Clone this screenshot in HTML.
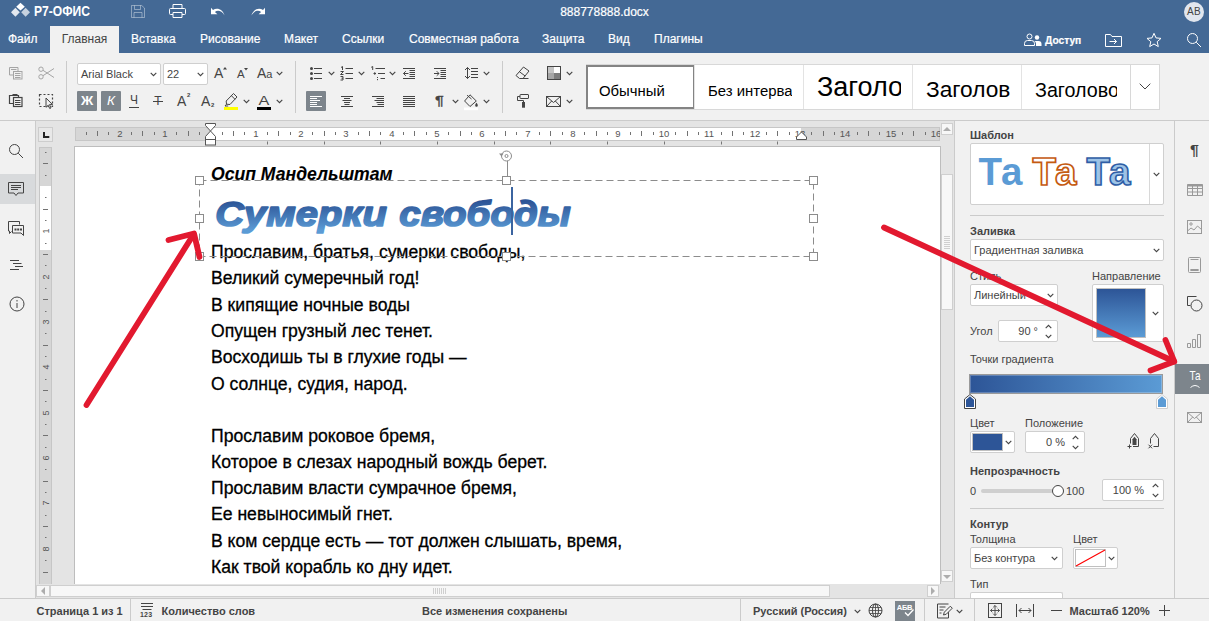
<!DOCTYPE html>
<html lang="ru">
<head>
<meta charset="utf-8">
<title>888778888.docx</title>
<style>
*{box-sizing:border-box;margin:0;padding:0}
html,body{width:1209px;height:621px;overflow:hidden;background:#e4e4e4;font-family:"Liberation Sans",Arial,sans-serif;font-size:11px;color:#444}
div{position:absolute;white-space:nowrap}
svg{position:absolute;overflow:visible}
#hdr{left:0;top:0;width:1209px;height:53px;background:#446995}
#logo{left:34px;top:3px;font-size:13.8px;font-weight:bold;color:#fff;line-height:18px;transform:scaleX(.875);transform-origin:0 0}
#title{left:0;width:1209px;top:5px;text-align:center;color:#fff;font-size:12px;line-height:14px;-webkit-text-stroke:.2px #fff}
.tab{top:26px;height:27px;line-height:26px;color:#fff;font-size:12px;-webkit-text-stroke:.2px #fff}
.tab.act{background:#f1f1f1;color:#444;text-align:center;-webkit-text-stroke:0}
#tb{left:0;top:53px;width:1209px;height:68px;background:#f1f1f1;border-bottom:1px solid #cbcbcb}
.sep{width:1px;background:#cbcbcb}
.cb{background:#fff;border:1px solid #cfcfcf;border-radius:2px;color:#444;overflow:hidden;font-size:11px}
.on{background:#7d858c;border-radius:1px}
.ic{stroke:#444;fill:none;stroke-width:1}
.b{font-weight:bold}
.t{color:#444;font-size:11px;line-height:13px}
.ln{left:211px;font-size:17.6px;color:#000;line-height:20px;-webkit-text-stroke:.3px #000}
.h{width:9px;height:9px;background:#fff;border:1px solid #8c8c8c}
.st{top:0;height:44px;overflow:hidden;color:#000}
.st span{position:absolute;left:0;white-space:nowrap}
.rn{font-size:9.5px;color:#555;line-height:10px;text-align:center;width:14px}
</style>
</head>
<body>
<div id="hdr"><svg style="left:0;top:0" width="40" height="20" viewBox="0 0 40 20"><path d="M20.5 2.8L24.8 6.7 20.5 10.6 16.2 6.7z" fill="#fff"/><path d="M15.4 7.8L19.8 12.2 15.4 16.8 11 12.2z" fill="#fff" opacity=".85"/><path d="M25.6 7.8L30 12.2 25.6 16.8 21.2 12.2z" fill="#fff" opacity=".7"/></svg><div id="logo">Р7-ОФИС</div><svg style="left:131px;top:5px" width="14" height="13" viewBox="0 0 14 13" opacity=".4"><path d="M.5 .5h10.2l2.8 2.6v9.4H.5z M3.5 .5v4h6v-4 M3 12.5v-5h8v5" fill="none" stroke="#fff"/></svg><svg style="left:169px;top:4px" width="17" height="14" viewBox="0 0 17 14"><path d="M4 4.5v-4h9v4 M4 10.5H1.5a1 1 0 0 1-1-1v-4a1 1 0 0 1 1-1h14a1 1 0 0 1 1 1v4a1 1 0 0 1-1 1H13 M4 8.5h9v5H4z" fill="none" stroke="#fff"/></svg><svg style="left:210px;top:7px" width="16" height="10" viewBox="0 0 16 10"><path d="M1 .8v6.4h6.4L4.9 4.9C7.6 2.9 11.6 3.4 14.6 8.6 13 2.6 7.3-.2 3 3z" fill="#fff"/></svg><svg style="left:250px;top:7px" width="16" height="10" viewBox="0 0 16 10"><path d="M15 .8v6.4H8.6l2.5-2.3C8.4 2.9 4.4 3.4 1.4 8.6 3 2.6 8.7-.2 13 3z" fill="#fff"/></svg><div id="title">888778888.docx</div><div style="left:1184px;top:2px;width:20px;height:20px;border-radius:10px;background:#e1e6ee;color:#444;font-size:10px;line-height:20px;text-align:center;letter-spacing:.3px">АВ</div><div class="tab" style="left:8px">Файл</div><div class="tab" style="left:131px">Вставка</div><div class="tab" style="left:200px">Рисование</div><div class="tab" style="left:284px">Макет</div><div class="tab" style="left:342px">Ссылки</div><div class="tab" style="left:409px">Совместная работа</div><div class="tab" style="left:542px">Защита</div><div class="tab" style="left:608px">Вид</div><div class="tab" style="left:654px">Плагины</div><div class="tab act" style="left:50px;width:69px">Главная</div><svg style="left:1024px;top:33px" width="18" height="14" viewBox="0 0 18 14"><circle cx="5.5" cy="3.5" r="2.5" fill="none" stroke="#fff"/><path d="M.5 12.5v-2a3 3 0 0 1 3-3h4a3 3 0 0 1 3 3v2z" fill="none" stroke="#fff"/><circle cx="13" cy="4.5" r="2.2" fill="#fff"/><path d="M10.5 8h4a3 3 0 0 1 3 3v2h-5.5v-2.5a4 4 0 0 0-1.5-2.5z" fill="#fff"/></svg><div class="tab b" style="left:1045px;font-size:10.2px;line-height:29px">Доступ</div><svg style="left:1105px;top:34px" width="17" height="13" viewBox="0 0 17 13"><path d="M.5 12.5V.5h5l1.5 2h9.5v10z" fill="none" stroke="#fff"/><path d="M4.5 7.5h7 M9 5l2.5 2.5L9 10" fill="none" stroke="#fff"/></svg><svg style="left:1146px;top:32px" width="16" height="16" viewBox="0 0 16 16"><path d="M8 1.3l2 4.6 5 .5-3.8 3.3 1.1 4.9L8 12l-4.3 2.6 1.1-4.9L1 6.4l5-.5z" fill="none" stroke="#fff" stroke-linejoin="round"/></svg><svg style="left:1186px;top:32px" width="16" height="16" viewBox="0 0 16 16"><circle cx="6.5" cy="6.5" r="5" fill="none" stroke="#fff"/><path d="M10.2 10.2l4.8 4.8" stroke="#fff" fill="none"/></svg></div><div id="tb"></div><div class="sep" style="left:66px;top:61px;height:52px"></div><div class="sep" style="left:295px;top:61px;height:52px"></div><div class="sep" style="left:502px;top:61px;height:52px"></div><svg style="left:9px;top:67px" width="16" height="14" viewBox="0 0 16 14"><path d="M9 4V.5H.5V8H4.5 M2 2.5h5.5" fill="none" stroke="#a5a5a5"/><rect x="4.5" y="4.5" width="8.5" height="7.5" fill="#f1f1f1" stroke="#a5a5a5"/><path d="M6 6.5h5.5 M6 8.5h5.5 M6 10.5h5.5" stroke="#a5a5a5"/></svg><svg style="left:38px;top:65.5px" width="17" height="14" viewBox="0 0 17 14"><circle cx="3" cy="3.2" r="2.2" fill="none" stroke="#a5a5a5"/><circle cx="3" cy="10.8" r="2.2" fill="none" stroke="#a5a5a5"/><path d="M5 4.3L16 11.5 M5 9.7L16 2.5" stroke="#a5a5a5" fill="none"/></svg><svg style="left:9px;top:94px" width="16" height="16" viewBox="0 0 16 16"><path d="M4.5 9.5H.5v-8H9.5v2" fill="none" stroke="#444" stroke-width="1.2"/><rect x="3.5" y="0" width="5" height="2" fill="#444"/><rect x="4.5" y="3.5" width="8.5" height="9" fill="#f1f1f1" stroke="#444" stroke-width="1.2"/><path d="M6 6.5h5.5 M6 8.5h5.5 M6 10.5h5.5" stroke="#444" stroke-width="1.2"/></svg><svg style="left:39px;top:94px" width="17" height="18" viewBox="0 0 17 18"><rect x=".5" y=".5" width="13" height="12" fill="none" stroke="#444" stroke-width="1.2" stroke-dasharray="2 2"/><path d="M7 4v9.3l2.2-2.1 1.5 3.3 1.3-.6-1.5-3.3h3z" fill="#f1f1f1" stroke="#444" stroke-linejoin="round"/></svg><div class="cb" style="left:77px;top:63px;width:84px;height:22px;line-height:20px;padding-left:3px">Arial Black</div><svg style="left:149.5px;top:71.5px" width="7" height="5" viewBox="0 0 7 5"><path d="M.7 .9l2.8 2.8L6.3 .9" fill="none" stroke="#444" stroke-width="1.1"/></svg><div class="cb" style="left:163px;top:63px;width:45px;height:22px;line-height:20px;padding-left:3px">22</div><svg style="left:196.5px;top:71.5px" width="7" height="5" viewBox="0 0 7 5"><path d="M.7 .9l2.8 2.8L6.3 .9" fill="none" stroke="#444" stroke-width="1.1"/></svg><div style="left:214px;top:65px;font-size:14px;line-height:16px;color:#444">A</div><svg style="left:222.5px;top:67px" width="4" height="3" viewBox="0 0 4 3"><path d="M0 2.5L2 0 4 2.5z" fill="#444"/></svg><div style="left:237px;top:67px;font-size:11.5px;line-height:14px;color:#444">A</div><svg style="left:244px;top:68px" width="4" height="3" viewBox="0 0 4 3"><path d="M0 0L2 2.5 4 0z" fill="#444"/></svg><div style="left:257px;top:65px;font-size:14px;line-height:16px;color:#444">A<span style="font-size:11px">a</span></div><svg style="left:275.5px;top:71px" width="7" height="5" viewBox="0 0 7 5"><path d="M.7 .9l2.8 2.8L6.3 .9" fill="none" stroke="#444" stroke-width="1.1"/></svg><div class="on" style="left:77px;top:91px;width:20px;height:20px"></div><div class="b" style="left:77px;top:91px;width:20px;text-align:center;font-size:13.5px;line-height:20px;color:#fff">Ж</div><div class="on" style="left:101px;top:91px;width:20px;height:20px"></div><div style="left:101px;top:91px;width:20px;text-align:center;font-size:13.5px;line-height:20px;color:#fff;font-style:italic">К</div><div style="left:124px;top:91px;width:20px;text-align:center;font-size:12px;line-height:19px;color:#444">Ч</div><div style="left:129px;top:107px;width:10px;height:1px;background:#444"></div><div style="left:148px;top:91px;width:20px;text-align:center;font-size:12px;line-height:20px;color:#444">Т</div><div style="left:153px;top:101px;width:10px;height:1px;background:#444"></div><div style="left:177px;top:91px;font-size:14px;line-height:20px;color:#444">A</div><div class="b" style="left:187px;top:92px;font-size:6px;line-height:7px;color:#444">2</div><div style="left:201px;top:91px;font-size:14px;line-height:20px;color:#444">A</div><div class="b" style="left:211px;top:102px;font-size:6px;line-height:7px;color:#444">2</div><svg style="left:224px;top:92px" width="15" height="19" viewBox="0 0 15 19"><path d="M9.5 1.5l3.5 3.5-7 7.5-3.5-.300-.300-3.2z M7.5 3.8l3.5 3.5 M2.5 12.2l-1.5 1.8h3.2" fill="none" stroke="#444" stroke-linejoin="round"/><rect x="0" y="15" width="14" height="3" fill="#ffff00"/></svg><svg style="left:242.5px;top:99px" width="7" height="5" viewBox="0 0 7 5"><path d="M.7 .9l2.8 2.8L6.3 .9" fill="none" stroke="#444" stroke-width="1.1"/></svg><div style="left:257px;top:93px;width:14px;text-align:center;font-size:13.5px;line-height:16px;color:#444;transform:scaleX(1.2)">A</div><div style="left:257px;top:107px;width:14px;height:3px;background:#000"></div><svg style="left:275.5px;top:99px" width="7" height="5" viewBox="0 0 7 5"><path d="M.7 .9l2.8 2.8L6.3 .9" fill="none" stroke="#444" stroke-width="1.1"/></svg><div class="on" style="left:306px;top:91px;width:20px;height:20px"></div><svg style="left:0;top:0" width="1209" height="130"><path d="M314 68.5H322 M314 73.5H322 M314 78.5H322" stroke="#444" fill="none"/><circle cx="311.5" cy="68.5" r="1.5" fill="#444"/><circle cx="311.5" cy="73.5" r="1.5" fill="#444"/><circle cx="311.5" cy="78.5" r="1.5" fill="#444"/><path d="M345.5 68.5H353 M345.5 73.5H353 M345.5 78.5H353" stroke="#444" fill="none"/><path d="M341 67.5l1.5-1v3.5 M340.5 71.5H343.5L340.5 74.5H343.5 M340.5 76.5H343V80H340.5 M341.5 78.2H343" stroke="#444" fill="none"/><path d="M375.5 68.5H385 M378 73.5H385 M380.5 78.5H385" stroke="#444" fill="none"/><path d="M371.2 67.3l1.5-.800v3.5 M373.5 73.5h2.5 M374.75 72.2v2.6 M377.5 77v1 M377.5 79v1.2" stroke="#444" fill="none"/><path d="M403 68.5H415 M409.5 70.5H415 M409.5 72.5H415 M409.5 74.5H415 M409.5 76.5H415 M403 78.5H415" stroke="#444" fill="none"/><path d="M403.5 73.5h5 M405.8 71.2l-2.3 2.3 2.3 2.3" stroke="#444" fill="none"/><path d="M434 68.5H446 M440.5 70.5H446 M440.5 72.5H446 M440.5 74.5H446 M440.5 76.5H446 M434 78.5H446" stroke="#444" fill="none"/><path d="M434 73.5h5 M436.7 71.2l2.3 2.3-2.3 2.3" stroke="#444" fill="none"/><path d="M471 68.5H478 M471 71.5H478 M471 74.5H478 M471 77.5H478" stroke="#444" fill="none"/><path d="M467.5 67.5v11 M465 70l2.5-2.5 2.5 2.5 M465 76l2.5 2.5 2.5-2.5" stroke="#444" fill="none"/><path d="M310 96.5H322 M310 98.5H317 M310 100.5H320 M310 102.5H317 M310 104.5H317 M310 106.5H322" stroke="#fff" fill="none"/><path d="M341 96.5H353 M344 98.5H350 M342.5 100.5H351.5 M344 102.5H350 M344.5 104.5H349.5 M341 106.5H353" stroke="#444" fill="none"/><path d="M372 96.5H384 M376.5 98.5H384 M374.5 100.5H384 M376.5 102.5H384 M377.5 104.5H384 M372 106.5H384" stroke="#444" fill="none"/><path d="M403 96.5H415 M403 98.5H415 M403 100.5H415 M403 102.5H415 M403 104.5H415 M403 106.5H415" stroke="#444" fill="none"/></svg><svg style="left:327.5px;top:71px" width="7" height="5" viewBox="0 0 7 5"><path d="M.7 .9l2.8 2.8L6.3 .9" fill="none" stroke="#444" stroke-width="1.1"/></svg><svg style="left:358px;top:71px" width="7" height="5" viewBox="0 0 7 5"><path d="M.7 .9l2.8 2.8L6.3 .9" fill="none" stroke="#444" stroke-width="1.1"/></svg><svg style="left:389px;top:71px" width="7" height="5" viewBox="0 0 7 5"><path d="M.7 .9l2.8 2.8L6.3 .9" fill="none" stroke="#444" stroke-width="1.1"/></svg><svg style="left:482.5px;top:71px" width="7" height="5" viewBox="0 0 7 5"><path d="M.7 .9l2.8 2.8L6.3 .9" fill="none" stroke="#444" stroke-width="1.1"/></svg><div style="left:435px;top:91.5px;font-size:13.5px;line-height:17px;color:#444;-webkit-text-stroke:.35px #444;transform:scaleX(1.22);transform-origin:0 0">¶</div><svg style="left:451.5px;top:99px" width="7" height="5" viewBox="0 0 7 5"><path d="M.7 .9l2.8 2.8L6.3 .9" fill="none" stroke="#444" stroke-width="1.1"/></svg><svg style="left:464px;top:93.5px" width="15" height="18" viewBox="0 0 15 18"><path d="M6 .8L12.3 7 6 12.5 .6 7z M3 1.2l4.5 3.8" fill="none" stroke="#444" stroke-linejoin="round"/><path d="M12.5 8.8c.9 1.3 1.3 1.9 1.3 2.6a1.3 1.3 0 0 1-2.6 0c0-.7.4-1.3 1.3-2.6z" fill="#444"/><rect x="0" y="13.5" width="14" height="2.7" fill="#fff"/></svg><svg style="left:482.5px;top:99px" width="7" height="5" viewBox="0 0 7 5"><path d="M.7 .9l2.8 2.8L6.3 .9" fill="none" stroke="#444" stroke-width="1.1"/></svg><svg style="left:515px;top:66px" width="15" height="14" viewBox="0 0 15 14"><path d="M8.5 1l5.5 4-6 7.5H4.5L1 9.5z M4.5 5.8l5.7 4.2 M5 12.5h8.5" fill="none" stroke="#444" stroke-linejoin="round"/></svg><svg style="left:517px;top:94px" width="13" height="14" viewBox="0 0 13 14"><rect x="3" y=".5" width="8.5" height="4" rx=".5" fill="none" stroke="#444"/><path d="M3 2.5H.5v4h6v2" fill="none" stroke="#444"/><rect x="5" y="8" width="3" height="5.7" fill="#444"/></svg><svg style="left:547px;top:66px" width="14" height="14" viewBox="0 0 14 14"><rect x="1" y="1" width="6" height="6" fill="#c4c4c4"/><rect x="7" y="1" width="6" height="6" fill="#fff"/><rect x="1" y="7" width="6" height="6" fill="#a6a6a6"/><rect x="7" y="7" width="6" height="6" fill="#7d7d7d"/><rect x=".5" y=".5" width="13" height="13" fill="none" stroke="#444"/></svg><svg style="left:565.5px;top:71px" width="7" height="5" viewBox="0 0 7 5"><path d="M.7 .9l2.8 2.8L6.3 .9" fill="none" stroke="#444" stroke-width="1.1"/></svg><svg style="left:546px;top:96px" width="15" height="11" viewBox="0 0 15 11"><rect x=".5" y=".5" width="14" height="10" fill="none" stroke="#444"/><path d="M.5 .5l7 6 7-6 M.5 10.5l5.2-5.5 M14.5 10.5L9.3 5" fill="none" stroke="#444"/></svg><svg style="left:565.5px;top:99px" width="7" height="5" viewBox="0 0 7 5"><path d="M.7 .9l2.8 2.8L6.3 .9" fill="none" stroke="#444" stroke-width="1.1"/></svg><div style="left:586px;top:64px;width:545px;height:46px;background:#fff;border:1px solid #d8d8d8"></div><div style="left:586px;top:65px;width:109px;height:44px;background:#fff;border:2px solid #848484"></div><div class="st" style="left:599px;top:65px;width:83px"><span style="font-size:14.9px;top:26.3px;line-height:0">Обычный</span></div><div style="left:694px;top:65px;width:1px;height:44px;background:#e3e3e3"></div><div class="st" style="left:708px;top:65px;width:84px"><span style="font-size:14.9px;top:26.3px;line-height:0">Без интервала</span></div><div style="left:803px;top:65px;width:1px;height:44px;background:#e3e3e3"></div><div class="st" style="left:817px;top:65px;width:84px"><span style="font-size:27px;top:22.1px;line-height:0">Заголовок 1</span></div><div style="left:912px;top:65px;width:1px;height:44px;background:#e3e3e3"></div><div class="st" style="left:926px;top:65px;width:84px"><span style="font-size:22.7px;top:24.2px;line-height:0">Заголовок 2</span></div><div style="left:1021px;top:65px;width:1px;height:44px;background:#e3e3e3"></div><div class="st" style="left:1035px;top:65px;width:82px"><span style="font-size:19.7px;top:24.7px;line-height:0">Заголовок 3</span></div><div style="left:1130px;top:64px;width:30px;height:46px;background:#fff;border:1px solid #d8d8d8"></div><svg style="left:1139px;top:83px" width="12" height="7" viewBox="0 0 12 7"><path d="M.7 .7l5.3 5.3L11.3 .7" fill="none" stroke="#444"/></svg><div style="left:36px;top:121px;width:919px;height:478px;background:#e4e4e4"></div><div style="left:74px;top:146px;width:867px;height:438px;background:#fff;border:1px solid #bdbdbd;border-bottom:0"></div><div style="left:0;top:121px;width:36px;height:478px;background:#f1f1f1;border-right:1px solid #cbcbcb"></div><div style="left:0;top:174px;width:35px;height:30px;background:#d8dadc"></div><svg style="left:8px;top:143px" width="16" height="16" viewBox="0 0 16 16"><circle cx="6.5" cy="6.5" r="5" fill="none" stroke="#444"/><path d="M10.2 10.2l4.8 4.8" stroke="#444" fill="none"/></svg><svg style="left:8px;top:182px" width="17" height="16" viewBox="0 0 17 16"><path d="M.5 .5h15v10.5h-5.5l-2 2.5-2-2.5H.5z" fill="none" stroke="#444"/><path d="M3 3.5h10 M3 5.5h10 M3 7.5h7" stroke="#444" fill="none"/></svg><svg style="left:8px;top:221px" width="18" height="16" viewBox="0 0 18 16"><path d="M11.5 3.5V.5H.5v9.5h1v2.5l2-2" fill="none" stroke="#444"/><path d="M4.5 4.5h11v7.5h0v2.5l-2.5-2.5H4.5z" fill="#f1f1f1" stroke="#444"/><rect x="6.5" y="7.5" width="2" height="2" fill="#444"/><rect x="9.2" y="7.5" width="2" height="2" fill="#444"/><rect x="12" y="7.5" width="2" height="2" fill="#444"/></svg><svg style="left:0;top:255px" width="30" height="20" viewBox="0 0 30 20"><path d="M10 5.5h9 M13 8.5h8.5 M15 11.5h8 M10 14.5h9" stroke="#444" fill="none"/></svg><svg style="left:8.5px;top:296px" width="16" height="16" viewBox="0 0 16 16"><circle cx="8" cy="8" r="7" fill="none" stroke="#444"/><path d="M8 7v5" stroke="#444" fill="none"/><rect x="7.5" y="4" width="1" height="1.5" fill="#444"/></svg><div style="left:38px;top:127px;width:15px;height:15px;background:#e8e8e8;border:1px solid #cdcdcd"></div><svg style="left:43px;top:132px" width="7" height="7" viewBox="0 0 7 7"><path d="M1 0v5h5.3" fill="none" stroke="#222" stroke-width="2"/></svg><div style="left:75px;top:127px;width:865px;height:14px;background:#d6d6d6;border:1px solid #c6c6c6"></div><div style="left:210px;top:128px;width:591px;height:12px;background:#fff"></div><svg style="left:0;top:0" width="1209" height="621"><path d="M86.5 132v3 M97.5 131v5 M108.5 132v3 M131.5 132v3 M142.5 131v5 M154.5 132v3 M176.5 132v3 M188.5 131v5 M199.5 132v3 M222.5 132v3 M233.5 131v5 M244.5 132v3 M267.5 132v3 M278.5 131v5 M290.5 132v3 M312.5 132v3 M324.5 131v5 M335.5 132v3 M358.5 132v3 M369.5 131v5 M380.5 132v3 M403.5 132v3 M414.5 131v5 M426.5 132v3 M448.5 132v3 M460.5 131v5 M471.5 132v3 M494.5 132v3 M505.5 131v5 M516.5 132v3 M539.5 132v3 M550.5 131v5 M562.5 132v3 M584.5 132v3 M596.5 131v5 M607.5 132v3 M630.5 132v3 M641.5 131v5 M653.5 132v3 M675.5 132v3 M687.5 131v5 M698.5 132v3 M721.5 132v3 M732.5 131v5 M743.5 132v3 M766.5 132v3 M777.5 131v5 M789.5 132v3 M811.5 132v3 M823.5 131v5 M834.5 132v3 M857.5 132v3 M868.5 131v5 M879.5 132v3 M902.5 132v3 M913.5 131v5 M925.5 132v3 " stroke="#727272" fill="none"/></svg><div style="left:75px;top:127px;width:865px;height:14px;overflow:hidden"><div class="rn" style="left:38px;top:1.5px">2</div><div class="rn" style="left:83px;top:1.5px">1</div><div class="rn" style="left:174px;top:1.5px">1</div><div class="rn" style="left:219px;top:1.5px">2</div><div class="rn" style="left:264px;top:1.5px">3</div><div class="rn" style="left:310px;top:1.5px">4</div><div class="rn" style="left:355px;top:1.5px">5</div><div class="rn" style="left:400px;top:1.5px">6</div><div class="rn" style="left:446px;top:1.5px">7</div><div class="rn" style="left:491px;top:1.5px">8</div><div class="rn" style="left:536px;top:1.5px">9</div><div class="rn" style="left:582px;top:1.5px">10</div><div class="rn" style="left:627px;top:1.5px">11</div><div class="rn" style="left:673px;top:1.5px">12</div><div class="rn" style="left:718px;top:1.5px">13</div><div class="rn" style="left:763px;top:1.5px">14</div><div class="rn" style="left:809px;top:1.5px">15</div><div class="rn" style="left:854px;top:1.5px">16</div></div><svg style="left:0;top:0" width="1209" height="621"><path d="M267.5 141.5v3 M324.5 141.5v3 M380.5 141.5v3 M437.5 141.5v3 M494.5 141.5v3 M550.5 141.5v3 M607.5 141.5v3 M664.5 141.5v3 M721.5 141.5v3 M777.5 141.5v3 " stroke="#777" fill="none"/></svg><svg style="left:205px;top:123px" width="11" height="23" viewBox="0 0 11 23"><path d="M.5 .5h10v2l-5 5.5-5-5.5z" fill="#fff" stroke="#555"/><path d="M.5 16.5v-3l5-5.5 5 5.5v3z" fill="#fff" stroke="#555"/><rect x=".5" y="16.5" width="10" height="5.5" fill="#fff" stroke="#555"/></svg><svg style="left:796px;top:131px" width="11" height="9" viewBox="0 0 11 9"><path d="M.5 8.5v-2.5l5-5 5 5v2.5z" fill="#fff" stroke="#555"/></svg><div style="left:39px;top:147px;width:13px;height:437px;background:#d6d6d6;border:1px solid #c6c6c6;border-bottom:0"></div><div style="left:40px;top:186px;width:11px;height:64px;background:#fff"></div><svg style="left:0;top:0" width="1209" height="621"><path d="M45 152.5h1.5 M43 163.5h5 M45 175.5h1.5 M45 197.5h1.5 M43 209.5h5 M45 220.5h1.5 M45 243.5h1.5 M43 254.5h5 M45 265.5h1.5 M45 288.5h1.5 M43 299.5h5 M45 311.5h1.5 M45 333.5h1.5 M43 345.5h5 M45 356.5h1.5 M45 379.5h1.5 M43 390.5h5 M45 401.5h1.5 M45 424.5h1.5 M43 435.5h5 M45 447.5h1.5 M45 469.5h1.5 M43 481.5h5 M45 492.5h1.5 M45 515.5h1.5 M43 526.5h5 M45 537.5h1.5 M45 560.5h1.5 M43 572.5h5 " stroke="#727272" fill="none"/></svg><div class="rn" style="left:38.5px;top:226px;font-size:9px;transform:rotate(-90deg)">1</div><div class="rn" style="left:38.5px;top:272px;font-size:9px;transform:rotate(-90deg)">2</div><div class="rn" style="left:38.5px;top:317px;font-size:9px;transform:rotate(-90deg)">3</div><div class="rn" style="left:38.5px;top:362px;font-size:9px;transform:rotate(-90deg)">4</div><div class="rn" style="left:38.5px;top:408px;font-size:9px;transform:rotate(-90deg)">5</div><div class="rn" style="left:38.5px;top:453px;font-size:9px;transform:rotate(-90deg)">6</div><div class="rn" style="left:38.5px;top:498px;font-size:9px;transform:rotate(-90deg)">7</div><div class="rn" style="left:38.5px;top:544px;font-size:9px;transform:rotate(-90deg)">8</div><div style="left:941px;top:121px;width:13px;height:463px;background:#e4e4e4"></div><div style="left:940.5px;top:122.5px;width:12px;height:12px;background:#f7f7f7;border:1px solid #cfcfcf"></div><svg style="left:942.5px;top:126.5px" width="8" height="4" viewBox="0 0 8 4"><path d="M0 4L4 0 8 4z" fill="#adadad"/></svg><div style="left:941px;top:174px;width:12px;height:136px;background:#f7f7f7;border:1px solid #cfcfcf"></div><svg style="left:944px;top:236px" width="6" height="14" viewBox="0 0 6 14"><path d="M0 .5h6M0 2.5h6M0 4.5h6M0 6.5h6M0 8.5h6M0 10.5h6M0 12.5h6" stroke="#cfcfcf" fill="none"/></svg><div style="left:941px;top:570px;width:12px;height:12px;background:#f7f7f7;border:1px solid #cfcfcf"></div><svg style="left:943px;top:574.5px" width="8" height="4" viewBox="0 0 8 4"><path d="M0 0L4 4 8 0z" fill="#adadad"/></svg><div style="left:36px;top:584px;width:905px;height:14px;background:#e4e4e4"></div><div style="left:36px;top:585px;width:14px;height:12px;background:#f7f7f7;border:1px solid #cfcfcf"></div><svg style="left:41px;top:587px" width="4" height="8" viewBox="0 0 4 8"><path d="M4 0L0 4 4 8z" fill="#adadad"/></svg><div style="left:50px;top:585px;width:780px;height:12px;background:#f7f7f7;border:1px solid #cfcfcf"></div><svg style="left:433px;top:588px" width="14" height="6" viewBox="0 0 14 6"><path d="M.5 0v6M2.5 0v6M4.5 0v6M6.5 0v6M8.5 0v6M10.5 0v6M12.5 0v6" stroke="#cfcfcf" fill="none"/></svg><div style="left:927px;top:585px;width:12px;height:12px;background:#f7f7f7;border:1px solid #cfcfcf"></div><svg style="left:931px;top:587px" width="4" height="8" viewBox="0 0 4 8"><path d="M0 0L4 4 0 8z" fill="#adadad"/></svg><div class="ln" style="top:164px;font-weight:bold;font-style:italic;-webkit-text-stroke:.1px #000">Осип Мандельштам</div><div class="ln" style="top:242px">Прославим, братья, сумерки свободы,</div><div class="ln" style="top:268px">Великий сумеречный год!</div><div class="ln" style="top:295px">В кипящие ночные воды</div><div class="ln" style="top:321px">Опущен грузный лес тенет.</div><div class="ln" style="top:347px">Восходишь ты в глухие годы —</div><div class="ln" style="top:374px">О солнце, судия, народ.</div><div class="ln" style="top:426px">Прославим роковое бремя,</div><div class="ln" style="top:452px">Которое в слезах народный вождь берет.</div><div class="ln" style="top:478px">Прославим власти сумрачное бремя,</div><div class="ln" style="top:504px">Ее невыносимый гнет.</div><div class="ln" style="top:531px">В ком сердце есть — тот должен слышать, время,</div><div class="ln" style="top:557px">Как твой корабль ко дну идет.</div><svg style="left:0;top:0" width="1209" height="621"><defs><linearGradient id="tg" gradientUnits="userSpaceOnUse" x1="0" y1="198" x2="0" y2="234"><stop offset=".1" stop-color="#2d5597"/><stop offset=".9" stop-color="#5b9bd5"/></linearGradient></defs><g font-family="Liberation Sans,Arial,sans-serif" font-size="35.2" font-weight="bold" font-style="italic" fill="url(#tg)" stroke="url(#tg)" stroke-width="1.7" stroke-linejoin="round"><text x="215.3" y="225.5" textLength="171.5" lengthAdjust="spacingAndGlyphs">Сумерки</text><text x="399.3" y="225.5" textLength="171.5" lengthAdjust="spacingAndGlyphs">свободы</text></g></svg><svg style="left:0;top:0" width="1209" height="621"><path d="M199.5 180.5H813.5V256.5H199.5z" fill="none" stroke="#8c8c8c" stroke-dasharray="7 4"/><path d="M507.5 161v15" stroke="#8c8c8c" fill="none"/><circle cx="506.5" cy="156" r="5" fill="#fff" stroke="#8c8c8c"/><circle cx="506.5" cy="156" r="1.5" fill="none" stroke="#8c8c8c"/><path d="M499 153.5l2.5 3 2-3z" fill="#8c8c8c"/></svg><div class="h" style="left:195px;top:176px"></div><div class="h" style="left:502px;top:176px"></div><div class="h" style="left:809px;top:176px"></div><div class="h" style="left:195px;top:214px"></div><div class="h" style="left:809px;top:214px"></div><div class="h" style="left:195px;top:252px"></div><div class="h" style="left:502px;top:252px"></div><div class="h" style="left:809px;top:252px"></div><div style="left:511px;top:187px;width:2px;height:48px;background:#3b64a0"></div><svg style="left:0;top:0" width="1209" height="621"><g fill="none" stroke="#e2192f" stroke-width="5.8" stroke-linecap="round" stroke-linejoin="round"><path d="M86.5 405L193.5 234.5"/><path d="M168.5 240L194 233.5 199.5 257"/></g></svg><div style="left:954px;top:121px;width:220px;height:478px;background:#f1f1f1;border-left:1px solid #cbcbcb"></div><div style="left:1174px;top:121px;width:35px;height:478px;background:#f1f1f1;border-left:1px solid #cbcbcb"></div><div class="t b" style="left:970px;top:129px">Шаблон</div><div class="cb" style="left:970px;top:143px;width:194px;height:62px"></div><div style="left:1149px;top:144px;width:1px;height:60px;background:#d8d8d8"></div><svg style="left:1153px;top:171.5px" width="7" height="5" viewBox="0 0 7 5"><path d="M.7 .9l2.8 2.8L6.3 .9" fill="none" stroke="#444" stroke-width="1.1"/></svg><svg style="left:970px;top:143px" width="180" height="62"><g font-family="Liberation Sans,Arial,sans-serif" font-size="38.5" font-weight="bold"><text x="8.5" y="42" fill="#5b9bd5">Та</text><text x="62.5" y="42" fill="#fff" stroke="#c55a11" stroke-width="1.7">Та</text><text x="116.5" y="42" fill="#9dc3e6" stroke="#2f5ea6" stroke-width="1.6">Та</text></g></svg><div style="left:970px;top:215px;width:194px;height:1px;background:#cbcbcb"></div><div class="t b" style="left:970px;top:225px">Заливка</div><div class="cb" style="left:970px;top:239px;width:194px;height:22px;line-height:20px;padding-left:3px">Градиентная заливка</div><svg style="left:1152.5px;top:248px" width="7" height="5" viewBox="0 0 7 5"><path d="M.7 .9l2.8 2.8L6.3 .9" fill="none" stroke="#444" stroke-width="1.1"/></svg><div class="tNone" style="left:970px;top:270px">Стиль</div><div class="tNone" style="left:1092px;top:270px">Направление</div><div class="cb" style="left:970px;top:284px;width:88px;height:22px;line-height:20px;padding-left:3px">Линейный</div><svg style="left:1046.5px;top:293px" width="7" height="5" viewBox="0 0 7 5"><path d="M.7 .9l2.8 2.8L6.3 .9" fill="none" stroke="#444" stroke-width="1.1"/></svg><div class="cb" style="left:1092px;top:284px;width:72px;height:58px"></div><div style="left:1096px;top:288px;width:50px;height:50px;background:linear-gradient(#2d5597,#5b9bd5);border:1px solid #c0c0c0"></div><svg style="left:1151.5px;top:311px" width="7" height="5" viewBox="0 0 7 5"><path d="M.7 .9l2.8 2.8L6.3 .9" fill="none" stroke="#444" stroke-width="1.1"/></svg><div class="tNone" style="left:970px;top:325px">Угол</div><div class="cb" style="left:998px;top:320px;width:60px;height:22px;line-height:20px;text-align:right;padding-right:19px">90 °</div><svg style="left:1044.5px;top:323.5px" width="7" height="15" viewBox="0 0 7 15"><path d="M.7 4.2l2.8-2.8 2.8 2.8 M.7 10.8l2.8 2.8 2.8-2.8" fill="none" stroke="#444" stroke-width="1.1"/></svg><div class="tNone" style="left:970px;top:353px">Точки градиента</div><div style="left:969px;top:374px;width:194px;height:20px;background:linear-gradient(90deg,#2d5597,#5b9bd5);border:1px solid #9a9a9a;box-shadow:inset 0 0 0 1px rgba(255,255,255,.25)"></div><svg style="left:964px;top:394px" width="12" height="15" viewBox="0 0 12 15"><path d="M.5 14.5V5L6 .5 11.5 5v9.5z" fill="#fff" stroke="#444"/><path d="M2 13V5.7L6 2.3l4 3.4V13z" fill="#2d5597"/></svg><svg style="left:1156px;top:394px" width="12" height="15" viewBox="0 0 12 15"><path d="M.5 14.5V5L6 .5 11.5 5v9.5z" fill="#fff" stroke="#cfcfcf"/><path d="M2 13V5.7L6 2.3l4 3.4V13z" fill="#5b9bd5"/></svg><div class="tNone" style="left:970px;top:417px">Цвет</div><div class="tNone" style="left:1025px;top:417px">Положение</div><div class="cb" style="left:970px;top:431px;width:45px;height:22px"></div><div style="left:972px;top:433px;width:31px;height:18px;background:#2d5597;border:1px solid #c0c0c0"></div><svg style="left:1005px;top:440px" width="7" height="5" viewBox="0 0 7 5"><path d="M.7 .9l2.8 2.8L6.3 .9" fill="none" stroke="#444" stroke-width="1.1"/></svg><div class="cb" style="left:1025px;top:431px;width:60px;height:22px;line-height:20px;text-align:right;padding-right:19px">0 %</div><svg style="left:1072px;top:434.5px" width="7" height="15" viewBox="0 0 7 15"><path d="M.7 4.2l2.8-2.8 2.8 2.8 M.7 10.8l2.8 2.8 2.8-2.8" fill="none" stroke="#444" stroke-width="1.1"/></svg><svg style="left:1127px;top:433px" width="13" height="17" viewBox="0 0 13 17"><path d="M3.5 10.5V5.5L7.5 .5l4 5v8H6" fill="none" stroke="#444"/><path d="M5.5 12V6.3l2-2.6 2 2.6V12z" fill="#444"/><path d="M.5 13.5h4M2.5 11.5v4" stroke="#444" fill="none"/></svg><svg style="left:1147px;top:433px" width="13" height="17" viewBox="0 0 13 17"><path d="M6.5 13.5h5V5.5L7.5 .5l-4 5v5" fill="none" stroke="#444"/><path d="M1.5 11.7l3.6 3.6M5.1 11.7l-3.6 3.6" stroke="#444" fill="none"/></svg><div class="t b" style="left:970px;top:465px">Непрозрачность</div><div class="tNone" style="left:970px;top:485px">0</div><div style="left:981px;top:489px;width:72px;height:4px;background:#cfcfcf;border-radius:2px"></div><div style="left:1052px;top:485px;width:12px;height:12px;border-radius:6px;background:#fff;border:1px solid #444"></div><div class="tNone" style="left:1066px;top:485px">100</div><div class="cb" style="left:1102px;top:479px;width:62px;height:22px;line-height:20px;text-align:right;padding-right:19px">100 %</div><svg style="left:1151.5px;top:482.5px" width="7" height="15" viewBox="0 0 7 15"><path d="M.7 4.2l2.8-2.8 2.8 2.8 M.7 10.8l2.8 2.8 2.8-2.8" fill="none" stroke="#444" stroke-width="1.1"/></svg><div style="left:970px;top:508px;width:194px;height:1px;background:#cbcbcb"></div><div class="t b" style="left:970px;top:518px">Контур</div><div class="tNone" style="left:970px;top:533px">Толщина</div><div class="tNone" style="left:1073px;top:533px">Цвет</div><div class="cb" style="left:970px;top:547px;width:93px;height:22px;line-height:20px;padding-left:3px">Без контура</div><svg style="left:1051px;top:556px" width="7" height="5" viewBox="0 0 7 5"><path d="M.7 .9l2.8 2.8L6.3 .9" fill="none" stroke="#444" stroke-width="1.1"/></svg><div class="cb" style="left:1073px;top:547px;width:45px;height:22px"></div><svg style="left:1075px;top:549px" width="31" height="18" viewBox="0 0 31 18"><rect x=".5" y=".5" width="30" height="17" fill="#fff" stroke="#c0c0c0"/><path d="M1 17L30 1" stroke="#f00" fill="none" stroke-width="1.2"/></svg><svg style="left:1107.5px;top:556px" width="7" height="5" viewBox="0 0 7 5"><path d="M.7 .9l2.8 2.8L6.3 .9" fill="none" stroke="#444" stroke-width="1.1"/></svg><div class="tNone" style="left:970px;top:578px">Тип</div><div class="cb" style="left:970px;top:592px;width:93px;height:10px;border-bottom:0"></div><div style="left:1175px;top:364px;width:34px;height:30px;background:#7d858c"></div><div class="b" style="left:1190px;top:142px;font-size:14.5px;line-height:17px;color:#444;transform:scaleX(1.1);transform-origin:0 0">¶</div><svg style="left:1187px;top:184px" width="16" height="12" viewBox="0 0 16 12"><path d="M.5 .5h15v11H.5z M.5 4.5h15 M.5 8h15 M5.5 .5v11 M10.5 .5v11" fill="none" stroke="#999"/><rect x=".5" y=".5" width="15" height="2" fill="#999"/></svg><svg style="left:1187px;top:220px" width="15" height="14" viewBox="0 0 15 14"><rect x=".5" y=".5" width="14" height="13" fill="none" stroke="#999"/><circle cx="4" cy="4" r="1.2" fill="none" stroke="#999"/><path d="M.5 11l3.5-3 3 2 3.5-4 4 3.5" fill="none" stroke="#999"/></svg><svg style="left:1188px;top:257px" width="13" height="16" viewBox="0 0 13 16"><rect x=".5" y=".5" width="12" height="15" rx="1" fill="none" stroke="#999"/><path d="M2.5 2.5h8 M2.5 13h8" stroke="#999" fill="none"/><rect x="2.5" y="12" width="8" height="2" fill="#999"/></svg><svg style="left:1187px;top:296px" width="16" height="16" viewBox="0 0 16 16"><path d="M9.5 .5h-9v9h3" fill="none" stroke="#444"/><circle cx="9.5" cy="9.5" r="5.5" fill="#f1f1f1" stroke="#444"/></svg><svg style="left:1187px;top:334px" width="15" height="14" viewBox="0 0 15 14"><path d="M.5 13.5v-4h3v4z M5.5 13.5v-8h3v8z M10.5 13.5V.5h3v13z" fill="none" stroke="#999"/></svg><div style="left:1185px;top:368px;width:20px;text-align:center;font-size:13.5px;line-height:16px;color:#fff;transform:scaleX(.74)">Та</div><svg style="left:1190px;top:384px" width="10" height="4" viewBox="0 0 10 4"><path d="M.5 3.5Q5-.5 9.5 3.5" fill="none" stroke="#fff"/></svg><svg style="left:1187px;top:412px" width="15" height="11" viewBox="0 0 15 11"><rect x=".5" y=".5" width="14" height="10" fill="none" stroke="#999"/><path d="M.5 .5l7 6 7-6 M.5 10.5l5.2-5.5 M14.5 10.5L9.3 5" fill="none" stroke="#999"/></svg><svg style="left:0;top:0" width="1209" height="621"><g fill="none" stroke="#e2192f" stroke-width="5.8" stroke-linecap="round" stroke-linejoin="round"><path d="M884 227.5L1174 361.5"/><path d="M1165.5 340L1174.3 361.5 1150.5 370.5"/></g></svg><div style="left:0;top:598px;width:1209px;height:23px;background:#f1f1f1;border-top:1px solid #cbcbcb"></div><div class="sep" style="left:130px;top:599px;height:22px"></div><div class="sep" style="left:740px;top:599px;height:22px"></div><div class="sep" style="left:924px;top:599px;height:22px"></div><div class="sep" style="left:974px;top:599px;height:22px"></div><div class="t b" style="left:36.5px;top:605px">Страница 1 из 1</div><svg style="left:140px;top:603px" width="14" height="15" viewBox="0 0 14 15"><path d="M1 .5h12 M1 3.5h12 M2.5 6.5h9" stroke="#444" fill="none"/></svg><div class="b" style="left:140px;top:611px;font-size:7px;line-height:8px;color:#444;letter-spacing:.2px">123</div><div class="t b" style="left:161.5px;top:605px">Количество слов</div><div class="t b" style="left:422px;top:605px">Все изменения сохранены</div><div class="t b" style="left:753px;top:605px">Русский (Россия)</div><svg style="left:853.5px;top:608.5px" width="7" height="5" viewBox="0 0 7 5"><path d="M.7 .9l2.8 2.8L6.3 .9" fill="none" stroke="#444" stroke-width="1.1"/></svg><svg style="left:868px;top:603px" width="15" height="15" viewBox="0 0 15 15"><circle cx="7.5" cy="7.5" r="6.5" fill="none" stroke="#444"/><ellipse cx="7.5" cy="7.5" rx="3" ry="6.5" fill="none" stroke="#444"/><path d="M1 7.5h13 M7.5 1v13 M2 4.5h11 M2 10.5h11" stroke="#444" fill="none" stroke-width=".8"/></svg><div style="left:895px;top:601px;width:20px;height:20px;background:#7d858c"></div><div class="b" style="left:895px;top:603px;width:19px;text-align:center;font-size:7.5px;line-height:9px;color:#fff;letter-spacing:-.3px">АБВ</div><svg style="left:904px;top:609px" width="10" height="8" viewBox="0 0 10 8"><path d="M1 3.5l3 3L9.5 .5" stroke="#fff" fill="none" stroke-width="1.3"/></svg><svg style="left:937px;top:603px" width="15" height="16" viewBox="0 0 15 15"><path d="M11.5 6.5v8H.5V.5h11" fill="none" stroke="#444"/><path d="M2.5 3.5h6 M2.5 6.5h4 M2.5 9.5h2" stroke="#444" fill="none"/><path d="M6.5 11.5l.8-2.8 6-6 2 2-6 6z" fill="#f1f1f1" stroke="#444" stroke-linejoin="round"/></svg><svg style="left:955.5px;top:609px" width="7" height="5" viewBox="0 0 7 5"><path d="M.7 .9l2.8 2.8L6.3 .9" fill="none" stroke="#444" stroke-width="1.1"/></svg><svg style="left:988px;top:603px" width="14" height="15" viewBox="0 0 14 15"><rect x=".5" y=".5" width="13" height="14" fill="none" stroke="#444"/><path d="M7 2.5v10 M2.5 7.5h9 M5.2 4.3L7 2.5l1.8 1.8 M5.2 10.7L7 12.5l1.8-1.8 M4.3 5.7L2.5 7.5l1.8 1.8 M9.7 5.7l1.8 1.8-1.8 1.8" fill="none" stroke="#444" stroke-width=".9"/></svg><svg style="left:1016px;top:604px" width="18" height="13" viewBox="0 0 18 13"><path d="M.5 0v13 M17.5 0v13 M3 6.5h12 M5.5 4L3 6.5 5.5 9 M12.5 4L15 6.5 12.5 9" fill="none" stroke="#444"/></svg><div style="left:1051px;top:610px;width:11px;height:1px;background:#444"></div><div class="t b" style="left:1069.5px;top:605px">Масштаб 120%</div><div style="left:1159px;top:610px;width:11px;height:1px;background:#444"></div><div style="left:1164px;top:605px;width:1px;height:11px;background:#444"></div>
</body>
</html>
